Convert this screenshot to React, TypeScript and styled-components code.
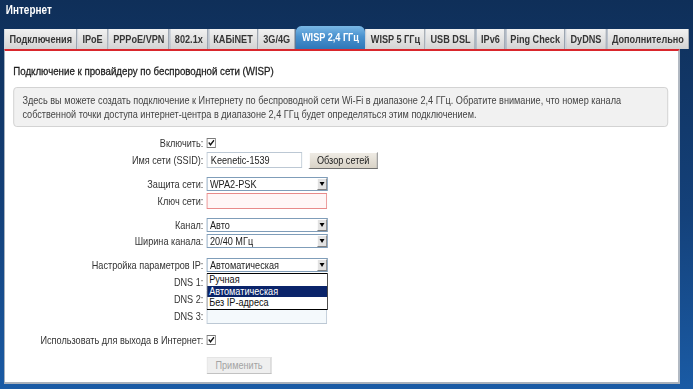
import styled, { createGlobalStyle } from "styled-components";

const GlobalStyle = createGlobalStyle`
  html, body {
    margin: 0;
    padding: 0;
  }
  body {
    font-family: "Liberation Sans", Arial, sans-serif;
  }
`;

const tabs = [
  "Подключения",
  "IPoE",
  "PPPoE/VPN",
  "802.1x",
  "КАБiNET",
  "3G/4G",
  "WISP 2,4 ГГц",
  "WISP 5 ГГц",
  "USB DSL",
  "IPv6",
  "Ping Check",
  "DyDNS",
  "Дополнительно",
];

// the screen is shown squeezed horizontally
const Viewport = styled.div`
  width: 693px;
  height: 389px;
  overflow: hidden;
  background: linear-gradient(180deg, #0f2f59 0%, #14417a 55%, #1a5ba5 100%);
`;

const Page = styled.div`
  width: 835px;
  height: 389px;
  transform: scaleX(0.83);
  transform-origin: 0 0;
  display: flex;
  flex-direction: column;
`;

const Header = styled.div`
  color: #fff;
  font-weight: bold;
  font-size: 12px;
  padding: 3px 0 0 7px;
  height: 26px;
  box-sizing: border-box;
`;

const TabBar = styled.div`
  display: flex;
  align-items: flex-end;
  margin-left: 5px;
  height: 23px;
`;

const Tab = styled.div<{ $active?: boolean }>`
  height: ${(p) => (p.$active ? 23 : 20)}px;
  line-height: ${(p) => (p.$active ? 23 : 20)}px;
  padding: 0 ${(p) => (p.$active ? 7 : 5.3)}px;
  font-size: 11px;
  font-weight: bold;
  white-space: nowrap;
  color: ${(p) => (p.$active ? "#fff" : "#363636")};
  border-radius: ${(p) => (p.$active ? "7px 7px 0 0" : "0")};
  background: ${(p) =>
    p.$active
      ? "linear-gradient(180deg, #7ab8e6 0%, #4a92cf 45%, #2e77b8 100%)"
      : "linear-gradient(180deg, #f1f1f1 0%, #e3e3e3 50%, #d3d3d3 100%)"};
  border-right: 1px solid ${(p) => (p.$active ? "transparent" : "#c2c2c2")};
  border-left: 1px solid ${(p) => (p.$active ? "transparent" : "#f7f7f7")};
  text-align: center;
`;

const Panel = styled.div`
  margin-left: 5px;
  width: 814px;
  height: 335px;
  box-sizing: border-box;
  background: #fff;
  border-top: 2px solid #d9262c;
  border-left: 1px solid #9aa6b4;
  border-right: 2px solid #a9b1bb;
  border-bottom: 2px solid #a9b1bb;
  padding: 13px 10px 0 10px;
  color: #333;
`;

const Title = styled.div`
  font-size: 11.7px;
  color: #1e1e1e;
  -webkit-text-stroke: 0.3px #1e1e1e;
  height: 18px;
`;

const InfoBox = styled.div`
  margin-top: 5px;
  width: 789px;
  box-sizing: border-box;
  background: #f1f1f1;
  border: 1px solid #cfcfcf;
  border-radius: 4px;
  padding: 5px 10px;
  font-size: 11px;
  line-height: 14px;
  color: #444;
  height: 40px;
`;

const Form = styled.div`
  display: flex;
  flex-direction: column;
`;

const Row = styled.div<{ $h: number; $gap?: number }>`
  display: flex;
  align-items: center;
  height: ${(p) => p.$h}px;
  margin-top: ${(p) => p.$gap ?? 0}px;
  font-size: 11px;
`;

const Label = styled.div`
  width: 229px;
  text-align: right;
  padding-right: 4px;
  white-space: nowrap;
  color: #333;
`;

const Controls = styled.div`
  display: flex;
  align-items: center;
  gap: 8px;
  position: relative;
`;

const Box = styled.span`
  width: 11px;
  height: 10px;
  box-sizing: border-box;
  border: 1px solid #7a7a7a;
  background: #fff;
  display: inline-flex;
  align-items: center;
  justify-content: center;
`;

const TextInput = styled.div<{ $w: number; $error?: boolean; $tint?: boolean }>`
  width: ${(p) => p.$w}px;
  height: 16px;
  box-sizing: border-box;
  border: 1px solid ${(p) => (p.$error ? "#e88a8a" : "#bcc8d4")};
  background: ${(p) => (p.$error ? "#fff6f6" : p.$tint ? "#f4f9fc" : "#fff")};
  font-size: 11px;
  line-height: 14px;
  padding-left: 4px;
  color: #222;
`;

const Button = styled.div<{ $disabled?: boolean }>`
  width: ${(p) => (p.$disabled ? 78 : 83)}px;
  height: 17px;
  box-sizing: border-box;
  text-align: center;
  font-size: 11px;
  line-height: 15px;
  color: ${(p) => (p.$disabled ? "#a3a3a3" : "#222")};
  background: ${(p) =>
    p.$disabled ? "#efefef" : "linear-gradient(180deg, #efebe4 0%, #d9d3c7 100%)"};
  border: 1px solid;
  border-color: ${(p) =>
    p.$disabled ? "#e4e4e4 #c2c2c2 #c2c2c2 #e4e4e4" : "#fff #6f6f6f #6f6f6f #fff"};
`;

const Select = styled.div`
  width: 146px;
  height: 14px;
  box-sizing: border-box;
  border: 1px solid #7f9db9;
  background: #fff;
  display: flex;
  align-items: center;
  font-size: 11px;
  color: #222;
  padding-left: 3px;
`;

const SelectText = styled.span`
  flex: 1;
  line-height: 12px;
`;

const Arrow = styled.span`
  width: 12px;
  height: 12px;
  box-sizing: border-box;
  background: #e2e2e2;
  border: 1px solid;
  border-color: #fff #808080 #808080 #fff;
  display: flex;
  align-items: center;
  justify-content: center;
  &::after {
    content: "";
    border-left: 3.5px solid transparent;
    border-right: 3.5px solid transparent;
    border-top: 4px solid #000;
  }
`;

const DropList = styled.div`
  position: absolute;
  left: 0;
  top: 15px;
  width: 146px;
  box-sizing: border-box;
  border: 1px solid #000;
  background: #fff;
  z-index: 5;
  font-size: 11px;
`;

const DropItem = styled.div<{ $selected?: boolean }>`
  height: 11.5px;
  line-height: 11px;
  padding-left: 2px;
  color: ${(p) => (p.$selected ? "#fff" : "#111")};
  background: ${(p) => (p.$selected ? "#0a246a" : "#fff")};
`;

const Check = () => (
  <Box>
    <svg width="9" height="8" viewBox="0 0 9 8">
      <path d="M1.5 3.5 L3.6 5.8 L7.8 1.2" stroke="#111" strokeWidth="1.6" fill="none" />
    </svg>
  </Box>
);

const SelectBox = ({ value }: { value: string }) => (
  <Select>
    <SelectText>{value}</SelectText>
    <Arrow />
  </Select>
);

export default function App() {
  return (
    <Viewport>
      <GlobalStyle />
      <Page>
        <Header>Интернет</Header>
        <TabBar>
          {tabs.map((t) => (
            <Tab key={t} $active={t === "WISP 2,4 ГГц"}>
              {t}
            </Tab>
          ))}
        </TabBar>
        <Panel>
          <Title>Подключение к провайдеру по беспроводной сети (WISP)</Title>
          <InfoBox>
            Здесь вы можете создать подключение к Интернету по беспроводной сети Wi-Fi в диапазоне 2,4 ГГц. Обратите внимание, что номер канала
            <br />
            собственной точки доступа интернет-центра в диапазоне 2,4 ГГц будет определяться этим подключением.
          </InfoBox>
          <Form>
            <Row $h={14} $gap={9}>
              <Label>Включить:</Label>
              <Controls>
                <Check />
              </Controls>
            </Row>
            <Row $h={18} $gap={1}>
              <Label>Имя сети (SSID):</Label>
              <Controls>
                <TextInput $w={115}>Keenetic-1539</TextInput>
                <Button>Обзор сетей</Button>
              </Controls>
            </Row>
            <Row $h={14} $gap={8}>
              <Label>Защита сети:</Label>
              <Controls>
                <SelectBox value="WPA2-PSK" />
              </Controls>
            </Row>
            <Row $h={16} $gap={2}>
              <Label>Ключ сети:</Label>
              <Controls>
                <TextInput $w={145} $error />
              </Controls>
            </Row>
            <Row $h={14} $gap={9}>
              <Label>Канал:</Label>
              <Controls>
                <SelectBox value="Авто" />
              </Controls>
            </Row>
            <Row $h={14} $gap={2}>
              <Label>Ширина канала:</Label>
              <Controls>
                <SelectBox value="20/40 МГц" />
              </Controls>
            </Row>
            <Row $h={14} $gap={10}>
              <Label>Настройка параметров IP:</Label>
              <Controls>
                <SelectBox value="Автоматическая" />
                <DropList>
                  <DropItem>Ручная</DropItem>
                  <DropItem $selected>Автоматическая</DropItem>
                  <DropItem>Без IP-адреса</DropItem>
                </DropList>
              </Controls>
            </Row>
            <Row $h={16} $gap={2}>
              <Label>DNS 1:</Label>
              <Controls>
                <TextInput $w={145} $tint />
              </Controls>
            </Row>
            <Row $h={16} $gap={1}>
              <Label>DNS 2:</Label>
              <Controls>
                <TextInput $w={145} $tint />
              </Controls>
            </Row>
            <Row $h={16} $gap={1}>
              <Label>DNS 3:</Label>
              <Controls>
                <TextInput $w={145} $tint />
              </Controls>
            </Row>
            <Row $h={14} $gap={9}>
              <Label>Использовать для выхода в Интернет:</Label>
              <Controls>
                <Check />
              </Controls>
            </Row>
            <Row $h={16} $gap={10}>
              <Label />
              <Controls>
                <Button $disabled>Применить</Button>
              </Controls>
            </Row>
          </Form>
        </Panel>
      </Page>
    </Viewport>
  );
}
